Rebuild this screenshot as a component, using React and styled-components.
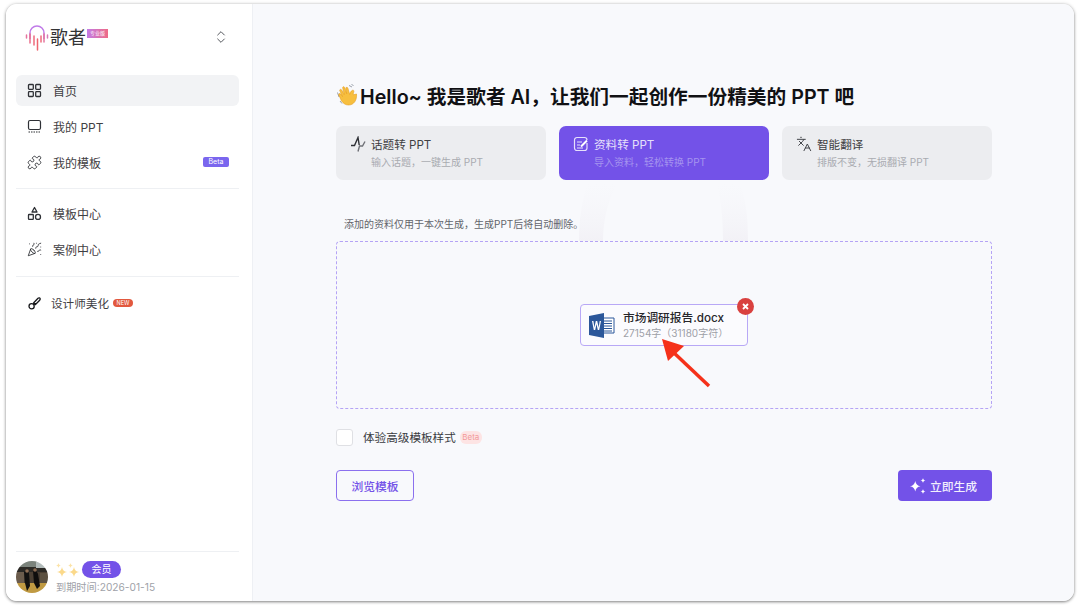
import styled, { createGlobalStyle } from "styled-components";
import { Puzzle, ChevronsUpDown, Languages, PartyPopper } from "lucide-react";

const purple = "#7352e8";
const fonts = `Inter, "Noto Sans CJK SC", sans-serif`;

const GlobalStyle = createGlobalStyle`
  html, body {
    margin: 0;
    background: #ffffff;
    font-family: ${fonts};
  }
  * { box-sizing: border-box; }
`;

const Page = styled.div`
  width: 1080px;
  height: 609px;
  padding: 4px 6px 8px;
  overflow: hidden;
`;
const Window = styled.div`
  height: 597px;
  display: flex;
  border-radius: 11px;
  overflow: hidden;
  box-shadow: 0 1px 3px rgba(0, 0, 0, 0.45), 0 0 4px rgba(0, 0, 0, 0.12);
`;
const Sidebar = styled.aside`
  width: 247px;
  flex: none;
  display: flex;
  flex-direction: column;
  padding: 0 13px 0 10px;
  background: #fff;
  border-right: 1px solid #eef0f4;
`;
const Brand = styled.div`
  height: 71px;
  display: flex;
  align-items: center;
  padding: 0 10px 5px 9px;
`;
const BrandName = styled.span`
  font-size: 18px;
  line-height: 24px;
  font-weight: 400;
  color: #333335;
  margin: 2px 0 0 1px;
`;
const BrandTag = styled.span`
  align-self: flex-start;
  margin: 25px 0 0 1px;
  width: 21px;
  height: 9px;
  background: linear-gradient(90deg, #c37be6, #ee6a86);
  color: #fff;
  font-size: 5px;
  line-height: 9px;
  text-align: center;
  white-space: nowrap;
`;
const Switcher = styled.span`
  margin-left: auto;
  display: flex;
  color: #55585e;
`;
const Group = styled.nav`
  display: flex;
  flex-direction: column;
  gap: 5px;
  padding: ${(p) => p.$top || 0}px 0 ${(p) => p.$bottom || 10}px;
  border-top: ${(p) => (p.$divided ? "1px solid #eef0f3" : "0")};
`;
const NavItem = styled.a`
  height: 31px;
  display: flex;
  align-items: center;
  gap: ${(p) => (p.$tight ? 9 : 11)}px;
  padding: 0 10px 1px 11px;
  border-radius: 6px;
  font-size: ${(p) => (p.$tight ? "11.6px" : "12px")};
  color: #3f4043;
  background: ${(p) => (p.$active ? "#f2f3f5" : "transparent")};
  svg { flex: none; color: #2e3035; }
`;
const BetaTag = styled.span`
  margin-left: auto;
  width: 26px;
  height: 10px;
  border-radius: 2px;
  background: #7a66ee;
  color: #fff;
  font-size: 7px;
  line-height: 10px;
  text-align: center;
`;
const NewTag = styled.span`
  width: 20px;
  height: 8px;
  margin-left: -5px;
  border-radius: 4px;
  background: #e2583e;
  color: #fff;
  font-size: 5.5px;
  line-height: 8px;
  text-align: center;
`;
const Profile = styled.div`
  margin-top: auto;
  height: 50px;
  border-top: 1px solid #eef0f3;
  display: flex;
  gap: 8px;
  padding-top: 9px;
`;
const Avatar = styled.div`
  width: 32px;
  height: 32px;
  border-radius: 50%;
  overflow: hidden;
  flex: none;
  svg { display: block; filter: blur(0.7px); }
`;
const ProfileInfo = styled.div`
  display: flex;
  flex-direction: column;
  gap: 3px;
`;
const ProfileTop = styled.div`
  display: flex;
  align-items: center;
  gap: 2px;
  height: 17px;
`;
const MemberPill = styled.span`
  width: 39px;
  height: 17px;
  border-radius: 9px;
  background: ${purple};
  color: #fff;
  font-size: 10px;
  line-height: 17px;
  text-align: center;
`;
const Expiry = styled.span`
  font-size: 10.2px;
  line-height: 13px;
  color: #a0a2a8;
`;
const Main = styled.main`
  flex: 1;
  background: #f8f9fc;
  position: relative;
  padding: 76px 0 0 83px;
`;
const Decor = styled.svg`
  position: absolute;
  left: 320px;
  top: 180px;
`;
const Content = styled.div`
  width: 656px;
  position: relative;
`;
const Title = styled.h1`
  margin: 0 0 16px;
  height: 30px;
  display: flex;
  align-items: center;
  gap: 2px;
  font-size: 19.7px;
  font-weight: 600;
  color: #111114;
  white-space: nowrap;
`;
const Tabs = styled.div`
  display: grid;
  grid-template-columns: repeat(3, 210px);
  gap: 13px;
`;
const Tab = styled.div`
  height: 54px;
  border-radius: 7px;
  display: flex;
  gap: 5px;
  padding: 10px 14px;
  background: ${(p) => (p.$active ? purple : "#ecedf0")};
  color: ${(p) => (p.$active ? "#e6e0fb" : "#3f4043")};
`;
const TabIcon = styled.span`
  width: 16px;
  height: 16px;
  flex: none;
  display: flex;
`;
const TabText = styled.div`
  display: flex;
  flex-direction: column;
  gap: 2px;
  padding-top: 1px;
  font-size: 11.6px;
  line-height: 17px;
`;
const TabSub = styled.span`
  font-size: 10px;
  line-height: 12px;
  color: ${(p) => (p.$active ? "#a594ef" : "#a9abb1")};
`;
const Note = styled.p`
  margin: 36px 0 8px 8px;
  font-size: 10px;
  line-height: 17px;
  color: #63656b;
`;
const Dropzone = styled.div`
  position: relative;
  height: 168px;
  border: 1px dashed #b5a4f5;
  border-radius: 4px;
  background: #f8f9fc;
  display: flex;
  align-items: center;
  justify-content: center;
`;
const FileCard = styled.div`
  position: relative;
  width: 168px;
  height: 42px;
  display: flex;
  align-items: center;
  gap: 8px;
  padding: 0 8px;
  border: 1px solid #b8a8f6;
  border-radius: 4px;
  background: #fbfbfe;
`;
const FileName = styled.div`
  font-size: 11.7px;
  font-weight: 500;
  line-height: 16px;
  color: #26262a;
  white-space: nowrap;
`;
const FileMeta = styled.div`
  font-size: 10px;
  line-height: 14px;
  color: #9ea0a7;
  white-space: nowrap;
`;
const RemoveBadge = styled.span`
  position: absolute;
  top: -7px;
  right: -7px;
  width: 17px;
  height: 17px;
  border-radius: 50%;
  background: #d9413f;
  display: flex;
  align-items: center;
  justify-content: center;
`;
const Arrow = styled.svg`
  position: absolute;
  left: 321px;
  top: 94px;
`;
const OptionRow = styled.label`
  display: flex;
  align-items: center;
  height: 18px;
  margin: 19px 0 24px;
  font-size: 11.6px;
  color: #3a3b3f;
`;
const Checkbox = styled.span`
  width: 17px;
  height: 17px;
  margin-right: 10px;
  border: 1px solid #dfe0e4;
  border-radius: 3px;
  background: #fff;
`;
const SoftTag = styled.span`
  margin-left: 4px;
  width: 22px;
  height: 13px;
  border-radius: 6px;
  background: #fde4e4;
  color: #f29a9a;
  font-size: 8px;
  line-height: 13px;
  text-align: center;
`;
const Actions = styled.div`
  display: flex;
  justify-content: space-between;
`;
const OutlineButton = styled.button`
  width: 78px;
  height: 31px;
  border: 1px solid #8b70ee;
  border-radius: 4px;
  background: transparent;
  color: ${purple};
  font: 500 11.8px ${fonts};
  padding: 0;
`;
const PrimaryButton = styled.button`
  width: 94px;
  height: 31px;
  border: 0;
  border-radius: 4px;
  background: ${purple};
  color: #f2effd;
  font: 500 11.8px ${fonts};
  display: flex;
  align-items: center;
  justify-content: center;
  gap: 4px;
  padding: 0 3px 0 0;
`;

const Logo = () => (
  <svg width="24" height="27" viewBox="0 0 24 27" fill="none">
    <path d="M5 15V9a7 7 0 0 1 14 0v6" stroke="#c07be8" strokeWidth="1.5" />
    <g strokeWidth="1.5" strokeLinecap="round">
      <path d="M1.5 11v3" stroke="#e5749f" />
      <path d="M5 10v9" stroke="#ea6f8c" />
      <path d="M9 12v9" stroke="#ee6b7c" />
      <path d="M12.5 15v11" stroke="#f0656f" />
      <path d="M16 12v6" stroke="#ee6b7c" />
      <path d="M19 10v8" stroke="#e5749f" />
      <path d="M22.5 11v3" stroke="#d87ab8" />
    </g>
  </svg>
);

const GridIcon = () => (
  <svg width="15" height="15" viewBox="0 0 15 15" fill="none" stroke="currentColor" strokeWidth="1.3">
    <rect x="1.5" y="1.500" width="4.800" height="4.800" rx=".8" />
    <rect x="8.700" y="1.500" width="4.800" height="4.800" rx=".8" />
    <rect x="1.5" y="8.700" width="4.800" height="4.800" rx=".8" />
    <rect x="8.700" y="8.700" width="4.800" height="4.800" rx=".8" />
  </svg>
);

const ScreenIcon = () => (
  <svg width="15" height="15" viewBox="0 0 15 15" fill="none" stroke="currentColor" strokeWidth="1.2">
    <rect x="1.5" y="1.5" width="12" height="9" rx="1.5" />
    <path d="M1.5 13h12" strokeDasharray="1.5 1" />
  </svg>
);

const ShapesIcon = () => (
  <svg width="15" height="15" viewBox="0 0 15 15" fill="none" stroke="currentColor" strokeWidth="1.3">
    <path d="M7.500 1.500 10 6H5z" strokeLinejoin="round" />
    <rect x="1.500" y="8.500" width="4.800" height="4.800" rx=".6" />
    <circle cx="11" cy="10.900" r="2.500" />
  </svg>
);

const BrushIcon = () => (
  <svg width="15" height="15" viewBox="0 0 15 15" fill="none" stroke="#17181b" strokeWidth="1.3">
    <path d="M7 6.5 11 2.2c.8-.7 2.4-.5 2.2.9-.1.6-.5 1.1-1 1.6L8.5 8.5z" />
    <circle cx="4.6" cy="10.3" r="2.6" />
    <path d="M6 6.8 8.2 9" />
  </svg>
);

const TopicIcon = () => (
  <svg width="16" height="16" viewBox="0 0 16 16" fill="none" stroke="#2e3035" strokeWidth="1.4">
    <path d="M1 9.500h3.500L8 1.500l1.200 7.500" />
    <path d="M8 15.500l1.500-5.500h3L15 5.500" stroke="#6f7177" />
  </svg>
);

const DocIcon = () => (
  <svg width="16" height="16" viewBox="0 0 16 16" fill="none" stroke="#e6e0fb" strokeWidth="1.2">
    <path d="M14 7v5a2.500 2.500 0 0 1-2.500 2.500H4A2.500 2.500 0 0 1 1.500 12V4A2.500 2.500 0 0 1 4 1.500h7.500A2.500 2.500 0 0 1 14 4" />
    <path d="M4 6h5M4 9h3M4 12h6" />
    <path d="M8 10.500l6-6" strokeWidth="2" stroke="#fff" />
  </svg>
);

const WordIcon = () => (
  <svg width="26" height="25" viewBox="0 0 26 25">
    <path d="M9 5h16v15H9z" fill="#fff" stroke="#2b579a" strokeWidth="1" />
    <path d="M15 8h8M15 10.5h8M15 13h8M15 15.500h8M15 18h8" stroke="#2b579a" strokeWidth="1" />
    <path d="M0 3 15 0v25L0 22z" fill="#2b579a" />
    <path d="M3 8l1.800 9h1.400L7.500 11l1.300 6h1.400L12 8h-1.300l-1 6.500L8.200 8H6.800L5.400 14.500 4.400 8z" fill="#fff" />
  </svg>
);

const Sparkle = ({ size = 9, x = 0, y = 0, fill = "#fff" }) => (
  <path
    transform={`translate(${x} ${y}) scale(${size / 10})`}
    d="M5 0c.5 3 2 4.500 5 5-3 .5-4.500 2-5 5-.5-3-2-4.500-5-5 3-.5 4.500-2 5-5z"
    fill={fill}
  />
);

const GenerateIcon = () => (
  <svg width="16" height="16" viewBox="0 0 16 16">
    <Sparkle size={10.500} x={0} y={3} />
    <Sparkle size={5} x={10.500} y={0} />
    <Sparkle size={5} x={10.500} y={11} />
  </svg>
);

const StarsEmoji = () => (
  <svg width="24" height="14" viewBox="0 0 24 14">
    <Sparkle size={10} x={1} y={4} fill="#fbd98a" />
    <Sparkle size={5} x={0} y={0} fill="#fce3a6" />
    <Sparkle size={10} x={13} y={4} fill="#fbd98a" />
    <Sparkle size={5} x={12} y={0} fill="#fce3a6" />
  </svg>
);

const WaveHand = () => (
  <svg width="22" height="22" viewBox="0 0 22 22" fill="none">
    <path d="M1.500 8.500 3 13M4 17l2 2.500M13 1.500l3 1.500M15.500.5l2 1" stroke="#9aa0ab" strokeWidth="1" />
    <path
      d="M20.500 10c.6 6-2.500 11-8 11-3 0-5-1.500-7-4L2.800 11c-.6-1.300 1-2 1.900-1L6.500 12.500 3.800 6.800c-.6-1.300 1.200-2 1.900-.8l2.600 4.700L6.700 4c-.3-1.400 1.500-1.800 2-.5l2 6.300-.8-5.300c-.2-1.300 1.600-1.600 2-.3l1.800 6.300c.4-1.500 1-3.400 2.700-4.200 1.200-.5 1.700.5 1.400 1.500-.4 1.200-.5 1.800-.5 3z"
      fill="#f7bf3f"
      stroke="#e59f24"
      strokeWidth=".6"
    />
  </svg>
);

const AvatarPhoto = () => (
  <svg width="32" height="32" viewBox="0 0 32 32">
    <rect width="32" height="32" fill="#4a3f33" />
    <rect width="32" height="8" fill="#7b837c" />
    <rect y="6" width="32" height="5" fill="#2c2a26" />
    <rect x="20" y="1" width="10" height="6" fill="#b3bcbb" />
    <rect y="22" width="32" height="10" fill="#c09a42" />
    <path d="M0 11h8v11H0z" fill="#6b5c4c" />
    <path d="M24 12h8v10h-8z" fill="#5c5142" />
    <path d="M8 11c2-2 4-2 5 1l1 13-3 5-2-8z" fill="#121110" />
    <path d="M17 10c3-1 4 0 5 3l2 12-3 3-3-6z" fill="#0f0e0d" />
    <circle cx="11" cy="10" r="1.800" fill="#8f6f55" />
    <circle cx="19" cy="9" r="1.800" fill="#8a6a50" />
  </svg>
);

const navTop = [
  { label: "首页", icon: <GridIcon />, active: true },
  { label: "我的 PPT", icon: <ScreenIcon /> },
  { label: "我的模板", icon: <Puzzle size={15} strokeWidth={1.5} />, beta: true },
];

const navMid = [
  { label: "模板中心", icon: <ShapesIcon /> },
  { label: "案例中心", icon: <PartyPopper size={15} strokeWidth={1.4} /> },
];

const tabs = [
  { title: "话题转 PPT", sub: "输入话题，一键生成 PPT", icon: <TopicIcon /> },
  { title: "资料转 PPT", sub: "导入资料，轻松转换 PPT", icon: <DocIcon />, active: true },
  { title: "智能翻译", sub: "排版不变，无损翻译 PPT", icon: <Languages size={16} strokeWidth={1.5} color="#45474c" /> },
];

export default function App() {
  return (
    <Page>
      <GlobalStyle />
      <Window>
        <Sidebar>
          <Brand>
            <Logo />
            <BrandName>歌者</BrandName>
            <BrandTag>专业版</BrandTag>
            <Switcher>
              <ChevronsUpDown size={16} strokeWidth={1.5} />
            </Switcher>
          </Brand>
          <Group>
            {navTop.map((item) => (
              <NavItem key={item.label} $active={item.active}>
                {item.icon}
                {item.label}
                {item.beta && <BetaTag>Beta</BetaTag>}
              </NavItem>
            ))}
          </Group>
          <Group $divided $top={9} $bottom={11}>
            {navMid.map((item) => (
              <NavItem key={item.label}>
                {item.icon}
                {item.label}
              </NavItem>
            ))}
          </Group>
          <Group $divided $top={11}>
            <NavItem $tight>
              <BrushIcon />
              设计师美化
              <NewTag>NEW</NewTag>
            </NavItem>
          </Group>
          <Profile>
            <Avatar>
              <AvatarPhoto />
            </Avatar>
            <ProfileInfo>
              <ProfileTop>
                <StarsEmoji />
                <MemberPill>会员</MemberPill>
              </ProfileTop>
              <Expiry>到期时间:2026-01-15</Expiry>
            </ProfileInfo>
          </Profile>
        </Sidebar>
        <Main>
          <Decor width="180" height="58" viewBox="0 0 180 58" fill="none">
            <defs>
              <linearGradient id="decorFade" x1="0" y1="0" x2="0" y2="1">
                <stop offset="0" stopColor="#f5f5f9" stopOpacity="0" />
                <stop offset="1" stopColor="#f2f1f6" />
              </linearGradient>
            </defs>
            <path d="M14 0C9 18 6 35 6 58h24c0-20 4-40 14-58z" fill="url(#decorFade)" />
            <path d="M144 0c5 20 6 40 6 58h25c0-25-2-42-8-58z" fill="url(#decorFade)" />
          </Decor>
          <Content>
            <Title>
              <WaveHand />
              Hello~ 我是歌者 AI，让我们一起创作一份精美的 PPT 吧
            </Title>
            <Tabs>
              {tabs.map((tab) => (
                <Tab key={tab.title} $active={tab.active}>
                  <TabIcon>{tab.icon}</TabIcon>
                  <TabText>
                    {tab.title}
                    <TabSub $active={tab.active}>{tab.sub}</TabSub>
                  </TabText>
                </Tab>
              ))}
            </Tabs>
            <Note>添加的资料仅用于本次生成，生成PPT后将自动删除。</Note>
            <Dropzone>
              <FileCard>
                <WordIcon />
                <div>
                  <FileName>市场调研报告.docx</FileName>
                  <FileMeta>27154字（31180字符）</FileMeta>
                </div>
                <RemoveBadge>
                  <svg width="7" height="7" viewBox="0 0 7 7">
                    <path d="M1 1l5 5M6 1L1 6" stroke="#fff" strokeWidth="1.800" />
                  </svg>
                </RemoveBadge>
              </FileCard>
              <Arrow width="56" height="52" viewBox="0 0 56 52" fill="none">
                <path d="M51 50 14 15" stroke="#f5311a" strokeWidth="3.500" />
                <path d="M4 3 26 10 10 25z" fill="#f5311a" />
              </Arrow>
            </Dropzone>
            <OptionRow>
              <Checkbox />
              体验高级模板样式
              <SoftTag>Beta</SoftTag>
            </OptionRow>
            <Actions>
              <OutlineButton>浏览模板</OutlineButton>
              <PrimaryButton>
                <GenerateIcon />
                立即生成
              </PrimaryButton>
            </Actions>
          </Content>
        </Main>
      </Window>
    </Page>
  );
}
